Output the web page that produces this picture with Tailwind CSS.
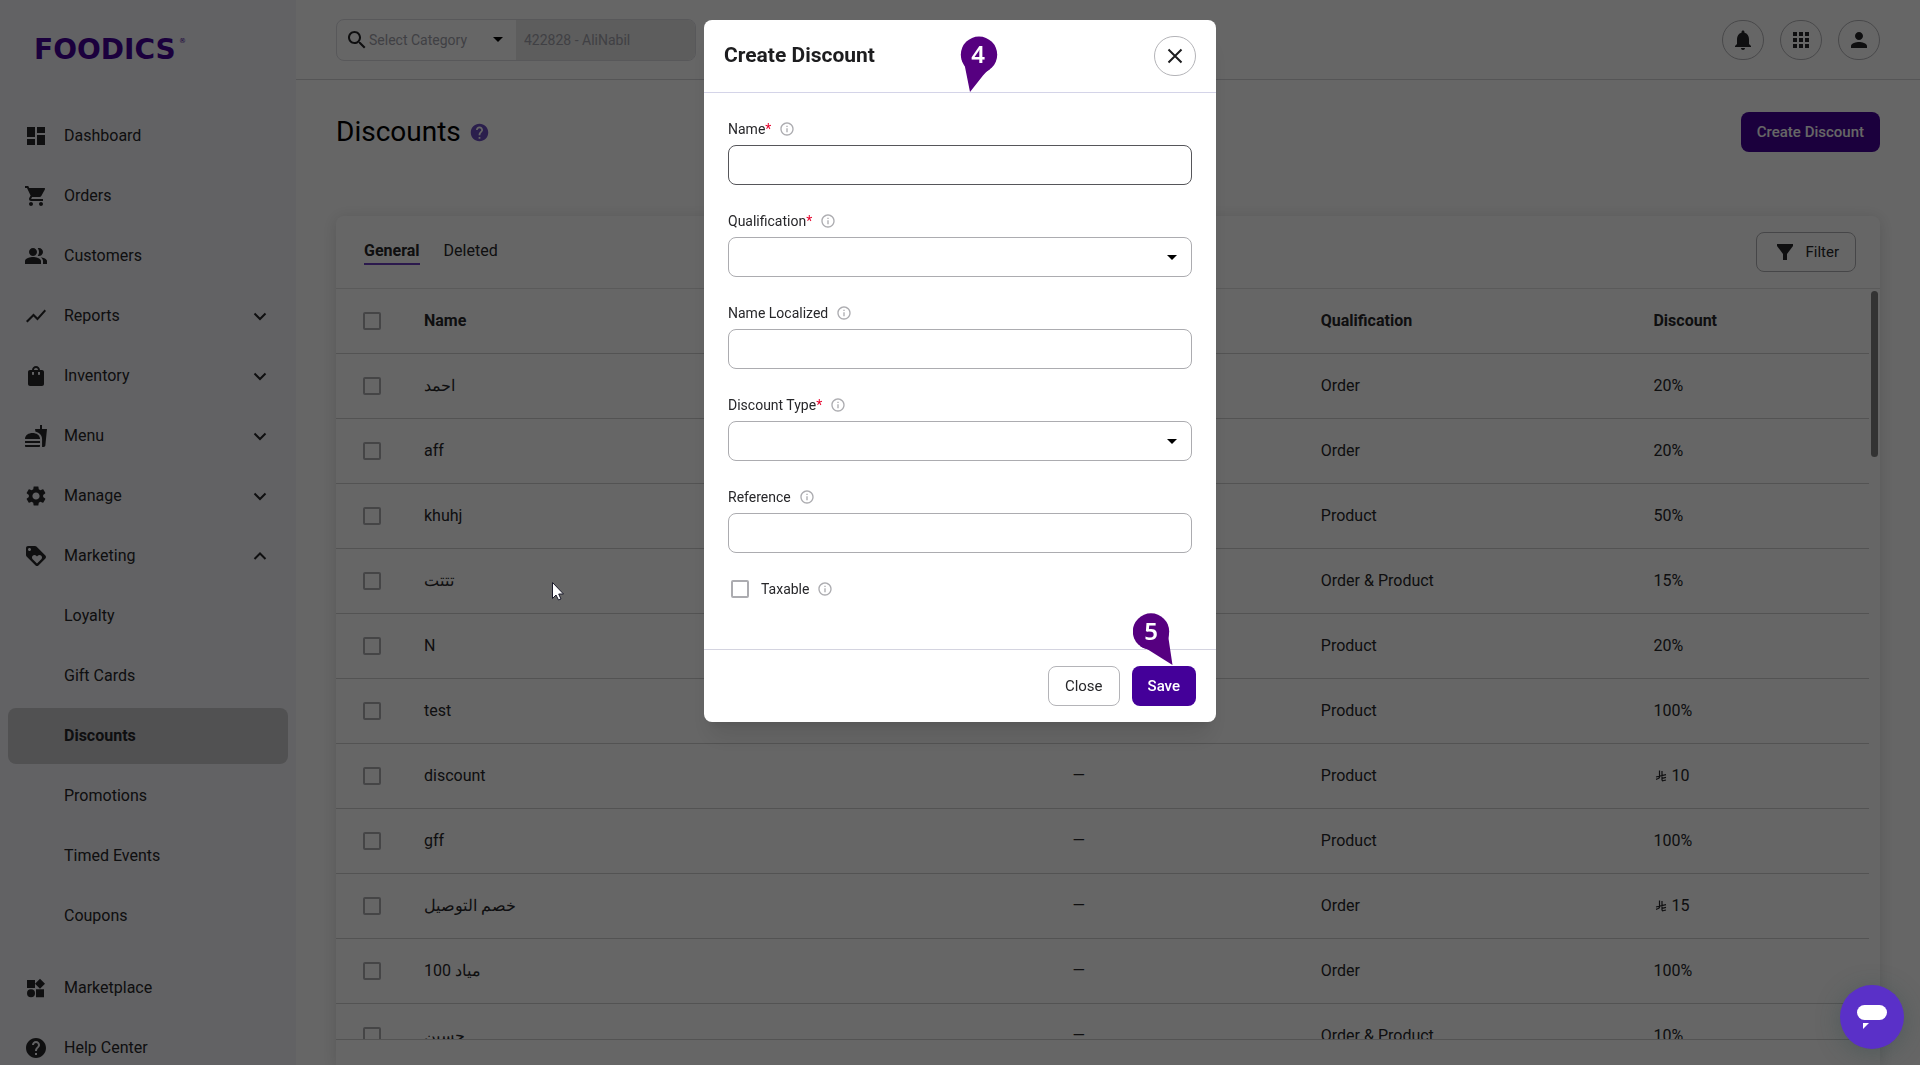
<!DOCTYPE html>
<html lang="en">

<head>
    <meta charset="UTF-8">
    <title>Discounts</title>
    <script src="https://cdn.jsdelivr.net/npm/@tailwindcss/browser@4"></script>
</head>

<body class="h-screen overflow-hidden bg-white text-[#27272a] text-base font-['Roboto','Noto_Sans',sans-serif]">

    <div class="flex h-full">
        <aside class="w-[296px] shrink-0 overflow-hidden bg-[#f5f5f9]">
            <div class="h-[108px] pt-[26px] pl-[34px]">
                <svg class="w-[160px] h-12" role="img" aria-label="Foodics">
                    <text x="0" y="33" font-family="DejaVu Sans" font-weight="bold" font-size="28" fill="#440099">FOODICS</text>
                    <text x="145" y="17" font-family="DejaVu Sans" font-size="7" fill="#440099">®</text>
                </svg>
            </div>
            <nav id="nav" class="flex flex-col gap-1 px-2"></nav>
        </aside>

        <div class="flex flex-1 min-w-0 flex-col">
            <header class="flex h-20 shrink-0 items-center justify-between border-b border-[#d4d4d8] px-10">
                <div class="flex h-[42px] w-[360px] overflow-hidden rounded-lg border border-[#dcdce2]">
                    <div class="relative flex w-[179px] shrink-0 items-center gap-0 pl-2">
                        <svg viewBox="0 0 24 24" class="size-6 shrink-0" fill="currentColor"><path d="M15.5 14h-.79l-.28-.27C15.41 12.59 16 11.11 16 9.5 16 5.91 13.09 3 9.5 3S3 5.91 3 9.5 5.91 16 9.5 16c1.61 0 3.09-.59 4.23-1.57l.27.28v.79l5 4.99L20.49 19l-4.99-5zm-6 0C7.01 14 5 11.99 5 9.5S7.01 5 9.5 5 14 7.01 14 9.5 11.99 14 9.5 14z"/></svg>
                        <select aria-label="Category" class="h-full w-full appearance-none bg-transparent text-sm text-[#a1a1aa] outline-none">
                            <option>Select Category</option>
                        </select>
                        <svg viewBox="0 0 10 5" class="pointer-events-none absolute right-[13px] h-[5px] w-[10px]"><path d="M0 0h10L5 5z"/></svg>
                    </div>
                    <input type="text" aria-label="Business" value="422828 - AliNabil" disabled class="min-w-0 flex-1 bg-[#e8e8e8] px-2 text-sm text-[#a1a1aa]">
                </div>
                <div class="flex gap-4">
                    <button aria-label="Notifications" class="flex h-10 w-[42px] items-center justify-center rounded-full border border-[#b4b4b8]">
                        <svg viewBox="0 0 24 24" class="size-6" fill="currentColor"><path d="M12 22c1.1 0 2-.9 2-2h-4c0 1.1.89 2 2 2zm6-6v-5c0-3.07-1.64-5.64-4.5-6.32V4c0-.83-.67-1.5-1.5-1.5s-1.5.67-1.5 1.5v.68C7.63 5.36 6 7.92 6 11v5l-2 2v1h16v-1l-2-2z"/></svg>
                    </button>
                    <button aria-label="Apps" class="flex h-10 w-[42px] items-center justify-center rounded-full border border-[#b4b4b8]">
                        <svg viewBox="0 0 24 24" class="size-6" fill="currentColor"><path d="M4 8h4V4H4v4zm6 12h4v-4h-4v4zm-6 0h4v-4H4v4zm0-6h4v-4H4v4zm6 0h4v-4h-4v4zm6-10v4h4V4h-4zm-6 4h4V4h-4v4zm6 6h4v-4h-4v4zm0 6h4v-4h-4v4z"/></svg>
                    </button>
                    <button aria-label="Account" class="flex h-10 w-[42px] items-center justify-center rounded-full border border-[#b4b4b8]">
                        <svg viewBox="0 0 24 24" class="size-6" fill="currentColor"><path d="M12 12c2.21 0 4-1.79 4-4s-1.79-4-4-4-4 1.79-4 4 1.79 4 4 4zm0 2c-2.67 0-8 1.34-8 4v2h16v-2c0-2.66-5.33-4-8-4z"/></svg>
                    </button>
                </div>
            </header>

            <main class="flex min-h-0 flex-1 flex-col px-10 pt-8">
                <div class="flex h-10 shrink-0 items-center justify-between">
                    <div class="flex items-center gap-2">
                        <h1 class="text-[28px] leading-10 text-black">Discounts</h1>
                        <a href="#" aria-label="Help" class="text-[#6b4fc0]">
                            <svg viewBox="0 0 24 24" class="size-[21px]" fill="currentColor"><path d="M12 2C6.48 2 2 6.48 2 12s4.48 10 10 10 10-4.48 10-10S17.52 2 12 2zm1 17h-2v-2h2v2zm2.07-7.75l-.9.92C13.45 12.9 13 13.5 13 15h-2v-.5c0-1.1.45-2.1 1.17-2.83l1.24-1.26c.37-.36.59-.86.59-1.41 0-1.1-.9-2-2-2s-2 .9-2 2H8c0-2.21 1.79-4 4-4s4 1.79 4 4c0 .88-.36 1.68-.93 2.25z"/></svg>
                        </a>
                    </div>
                    <button class="h-10 rounded-lg bg-[#440099] px-4 text-[15px] font-medium text-white">Create Discount</button>
                </div>

                <section class="mt-16 flex min-h-0 flex-1 flex-col rounded-t-lg shadow-[0_2px_16px_rgba(0,0,0,0.14)]">
                    <div class="flex h-[73px] shrink-0 items-center justify-between border-b border-[#e0e0e0] pr-6 pl-7">
                        <div class="flex gap-6 text-base">
                            <a href="#" class="border-b-2 border-[#6b3fc0] font-bold">General</a>
                            <a href="#">Deleted</a>
                        </div>
                        <button class="flex h-10 items-center gap-2 rounded-lg border border-[#b0b0b4] px-4 text-[15px]">
                            <svg viewBox="0 0 24 24" class="size-6" fill="currentColor"><path d="M4 4h16v2l-6 8v6h-4v-6L4 6z"/></svg>
                            Filter
                        </button>
                    </div>
                    <div class="relative min-h-0 flex-1 overflow-hidden pr-[11px]">
                        <table class="w-full table-fixed border-collapse text-left">
                            <thead>
                                <tr class="h-16 border-b border-[#cfcfcf]">
                                    <th class="w-[88px] pl-[27px]"><input type="checkbox" aria-label="Select all" class="block size-[18px] appearance-none rounded-xs border-2 border-[#acacb0]"></th>
                                    <th class="w-[42.3%] font-bold">Name</th>
                                    <th class="w-[16.2%]"></th>
                                    <th class="w-[21.7%] font-bold">Qualification</th>
                                    <th class="font-bold">Discount</th>
                                </tr>
                            </thead>
                            <tbody id="rows"></tbody>
                        </table>
                        <div class="absolute top-[2px] right-[2px] h-[166px] w-[7px] rounded-full bg-[#808080]"></div>
                    </div>
                    <div class="h-[26px] shrink-0 border-t border-[#cfcfcf]"></div>
                </section>
            </main>
        </div>
    </div>

    <!-- Create discount modal -->
    <div class="fixed inset-0 flex items-start justify-center bg-black/60 pt-5">
        <div role="dialog" aria-labelledby="modalTitle" class="relative w-full max-w-lg rounded-lg bg-white shadow-xl">
            <div class="flex h-[73px] items-center justify-between border-b border-[#d4d4e8] px-5">
                <h2 id="modalTitle" class="text-[21px] font-bold text-[#1d1d1f]">Create Discount</h2>
                <button aria-label="Close dialog" class="flex h-10 w-[42px] items-center justify-center rounded-full border border-[#b4b4b8]">
                    <svg viewBox="0 0 24 24" class="size-6" fill="none" stroke="#1d1d1f" stroke-width="2"><path d="M5.500 5.500l13 13M18.500 5.500l-13 13"/></svg>
                </button>
            </div>

            <form id="discountForm" class="flex flex-col gap-6 px-6 pt-6 text-sm">
                <div>
                    <div class="mb-1 flex h-6 items-center gap-2">
                        <label for="name">Name<span class="text-[#e5002b]">*</span></label>
                        <svg viewBox="0 0 24 24" class="size-4 text-[#acacb0]" fill="currentColor"><use href="#info"/></svg>
                    </div>
                    <input id="name" type="text" class="block h-10 w-full rounded-lg border border-[#56565a] px-3 outline-none">
                </div>
                <div>
                    <div class="mb-1 flex h-6 items-center gap-2">
                        <label for="qualification">Qualification<span class="text-[#e5002b]">*</span></label>
                        <svg viewBox="0 0 24 24" class="size-4 text-[#acacb0]" fill="currentColor"><use href="#info"/></svg>
                    </div>
                    <div class="relative flex items-center">
                        <select id="qualification" class="h-10 w-full appearance-none rounded-lg border border-[#acacb0] px-3 outline-none">
                            <option></option>
                        </select>
                        <svg viewBox="0 0 10 5" class="pointer-events-none absolute right-[15px] h-[5px] w-[10px]"><path d="M0 0h10L5 5z"/></svg>
                    </div>
                </div>
                <div>
                    <div class="mb-1 flex h-6 items-center gap-2">
                        <label for="nameLocalized">Name Localized</label>
                        <svg viewBox="0 0 24 24" class="size-4 text-[#acacb0]" fill="currentColor"><use href="#info"/></svg>
                    </div>
                    <input id="nameLocalized" type="text" class="block h-10 w-full rounded-lg border border-[#acacb0] px-3 outline-none">
                </div>
                <div>
                    <div class="mb-1 flex h-6 items-center gap-2">
                        <label for="discountType">Discount Type<span class="text-[#e5002b]">*</span></label>
                        <svg viewBox="0 0 24 24" class="size-4 text-[#acacb0]" fill="currentColor"><use href="#info"/></svg>
                    </div>
                    <div class="relative flex items-center">
                        <select id="discountType" class="h-10 w-full appearance-none rounded-lg border border-[#acacb0] px-3 outline-none">
                            <option></option>
                        </select>
                        <svg viewBox="0 0 10 5" class="pointer-events-none absolute right-[15px] h-[5px] w-[10px]"><path d="M0 0h10L5 5z"/></svg>
                    </div>
                </div>
                <div>
                    <div class="mb-1 flex h-6 items-center gap-2">
                        <label for="reference">Reference</label>
                        <svg viewBox="0 0 24 24" class="size-4 text-[#acacb0]" fill="currentColor"><use href="#info"/></svg>
                    </div>
                    <input id="reference" type="text" class="block h-10 w-full rounded-lg border border-[#acacb0] px-3 outline-none">
                </div>
                <div class="mb-12 flex h-6 items-center gap-2 pl-[3px]">
                    <input id="taxable" type="checkbox" class="mr-1 size-[18px] appearance-none rounded-xs border-2 border-[#acacb0]">
                    <label for="taxable">Taxable</label>
                    <svg viewBox="0 0 24 24" class="size-4 text-[#acacb0]" fill="currentColor"><use href="#info"/></svg>
                </div>
            </form>

            <div class="flex justify-end gap-3 border-t border-[#d4d4e0] px-5 py-4 text-[15px]">
                <button class="h-10 rounded-lg border border-[#b4b4b8] px-4">Close</button>
                <button type="submit" form="discountForm" class="h-10 rounded-lg bg-[#440099] px-4 font-medium text-white">Save</button>
            </div>

            <!-- Step markers -->
            <svg viewBox="0 0 40 58" class="absolute top-4 left-[255px] h-[58px] w-10">
                <g fill="#560080"><circle cx="20" cy="18.700" r="18.200"/><path d="M2.500 23Q5 26 6 31L11 56 24 39.500Q26 36.500 31 33z"/></g>
                <text x="19" y="27" text-anchor="middle" font-family="Noto Sans" font-weight="600" font-size="24" fill="#fff">4</text>
            </svg>
            <svg viewBox="0 0 44 58" class="absolute right-[39px] bottom-14 h-[58px] w-11">
                <g fill="#560080"><circle cx="18" cy="23.500" r="18.200"/><path d="M7 38Q10 40 14 41L39.500 57 35.600 31V22z"/></g>
                <text x="18" y="32" text-anchor="middle" font-family="Noto Sans" font-weight="600" font-size="24" fill="#fff">5</text>
            </svg>
        </div>
    </div>

    <!-- Mouse pointer -->
    <svg viewBox="0 0 14 20" class="fixed top-[581px] left-[551px] h-5 w-[14px]"><path d="M1.500 1.500v16l3.500-3.500 2.500 5 2.500-1-2.300-5h4.800z" fill="#fff" stroke="#1a1a2a"/></svg>

    <button aria-label="Open chat" class="fixed right-4 bottom-4 flex size-16 items-center justify-center rounded-full bg-[#5a30c8] shadow-[0_4px_24px_rgba(40,70,70,0.35)]">
        <svg viewBox="0 0 32 26" class="h-[26px] w-8" fill="#fff"><rect x="1" y="1" width="30" height="15" rx="7.500"/><path d="M7 19h6l-6 6z"/></svg>
    </button>

    <svg class="hidden">
        <symbol id="info" viewBox="0 0 24 24"><path d="M11 7h2v2h-2zm0 4h2v6h-2zm1-9C6.480 2 2 6.480 2 12s4.480 10 10 10 10-4.480 10-10S17.520 2 12 2zm0 18c-4.410 0-8-3.590-8-8s3.590-8 8-8 8 3.590 8 8-3.590 8-8 8z"/></symbol>
        <symbol id="riyal" viewBox="0 0 12 12"><path d="M4.500.5v6.500Q4.500 8.500 1 9.300M7 1v9.500M1 7l10-2.300M7 8.300l4-1M7 11l4-1" fill="none" stroke="currentColor" stroke-width="1.200"/></symbol>
    </svg>

    <script>
        const icons = {
            dashboard: "M3 13h8V3H3v10zm0 8h8v-6H3v6zm10 0h8V11h-8v10zm0-18v6h8V3h-8z",
            cart: "M7 18c-1.1 0-1.99.9-1.99 2S5.9 22 7 22s2-.9 2-2-.9-2-2-2zM1 2v2h2l3.6 7.59-1.35 2.45c-.16.28-.25.61-.25.96 0 1.1.9 2 2 2h12v-2H7.42c-.14 0-.25-.11-.25-.25l.03-.12.9-1.63h7.45c.75 0 1.41-.41 1.75-1.03l3.58-6.49A1.003 1.003 0 0 0 20 4H5.21l-.94-2H1zm16 16c-1.1 0-1.99.9-1.99 2s.89 2 1.99 2 2-.9 2-2-.9-2-2-2z",
            people: "M16.67 13.13C18.04 14.06 19 15.32 19 17v3h4v-3c0-2.18-3.57-3.47-6.33-3.87zM15 12c2.21 0 4-1.79 4-4s-1.79-4-4-4c-.47 0-.91.1-1.33.24C14.5 5.27 15 6.58 15 8s-.5 2.73-1.33 3.76c.42.14.86.24 1.33.24zM9 12c2.21 0 4-1.79 4-4s-1.79-4-4-4-4 1.79-4 4 1.79 4 4 4zm0 1c-2.67 0-8 1.34-8 4v3h16v-3c0-2.66-5.33-4-8-4z",
            chart: "M3.5 18.49l6-6.01 4 4L22 6.92l-1.41-1.41-7.09 7.97-4-4L2 16.99z",
            bag: "M18 6h-2c0-2.21-1.79-4-4-4S8 3.79 8 6H6c-1.1 0-2 .9-2 2v12c0 1.1.9 2 2 2h12c1.1 0 2-.9 2-2V8c0-1.1-.9-2-2-2zm-8 4c0 .55-.45 1-1 1s-1-.45-1-1V8h2v2zm2-6c1.1 0 2 .9 2 2h-4c0-1.1.9-2 2-2zm4 6c0 .55-.45 1-1 1s-1-.45-1-1V8h2v2z",
            food: "M18.06 22.99h1.66c.84 0 1.53-.64 1.63-1.46L23 5.05h-5V1h-1.97v4.05h-4.97l.3 2.34c1.71.47 3.31 1.32 4.27 2.26 1.44 1.42 2.43 2.89 2.43 5.29v8.05zM1 21.99V21h15.03v.99c0 .55-.45 1-1.01 1H2.01c-.56 0-1.01-.45-1.01-1zm15.03-7c0-8-15.03-8-15.03 0h15.03zM1.02 17h15v2h-15z",
            gear: "M19.14 12.94c.04-.3.06-.61.06-.94 0-.32-.02-.64-.07-.94l2.03-1.58c.18-.14.23-.41.12-.61l-1.92-3.32c-.12-.22-.37-.29-.59-.22l-2.39.96c-.5-.38-1.03-.7-1.62-.94l-.36-2.54c-.04-.24-.24-.41-.48-.41h-3.84c-.24 0-.43.17-.47.41l-.36 2.54c-.59.24-1.13.57-1.62.94l-2.39-.96c-.22-.08-.47 0-.59.22L2.74 8.87c-.12.21-.08.47.12.61l2.03 1.58c-.05.3-.09.63-.09.94s.02.64.07.94l-2.03 1.58c-.18.14-.23.41-.12.61l1.92 3.32c.12.22.37.29.59.22l2.39-.96c.5.38 1.03.7 1.62.94l.36 2.54c.05.24.24.41.48.41h3.84c.24 0 .44-.17.47-.41l.36-2.54c.59-.24 1.13-.56 1.62-.94l2.39.96c.22.08.47 0 .59-.22l1.92-3.32c.12-.22.07-.47-.12-.61l-2.01-1.58zM12 15.6c-1.98 0-3.6-1.62-3.6-3.6s1.62-3.6 3.6-3.6 3.6 1.62 3.6 3.6-1.62 3.6-3.6 3.6z",
            tag: "M21.41 11.58l-9-9C12.05 2.22 11.55 2 11 2H4c-1.1 0-2 .9-2 2v7c0 .55.22 1.05.59 1.42l9 9c.36.36.86.58 1.41.58.55 0 1.05-.22 1.41-.59l7-7c.37-.36.59-.86.59-1.41 0-.55-.23-1.06-.59-1.42zM5.5 7C4.67 7 4 6.33 4 5.5S4.67 4 5.5 4 7 4.67 7 5.5 6.33 7 5.5 7zm11.77 8.27L13 19.54l-4.27-4.27C8.28 14.81 8 14.19 8 13.5c0-1.38 1.12-2.5 2.5-2.5.69 0 1.32.28 1.77.74l.73.72.73-.73c.45-.45 1.08-.73 1.77-.73 1.38 0 2.5 1.12 2.5 2.5 0 .69-.28 1.32-.73 1.77z",
            market: "M3 4h8v8H3zM16 2.800l5 5-5 5-5-5zM12 13.200h8v8h-8zM7 13.200a4 4 0 1 1 0 8 4 4 0 0 1 0-8z",
            help: "M12 2C6.48 2 2 6.48 2 12s4.48 10 10 10 10-4.48 10-10S17.52 2 12 2zm1 17h-2v-2h2v2zm2.07-7.75l-.9.92C13.45 12.9 13 13.5 13 15h-2v-.5c0-1.1.45-2.1 1.17-2.83l1.24-1.26c.37-.36.59-.86.59-1.41 0-1.1-.9-2-2-2s-2 .9-2 2H8c0-2.21 1.79-4 4-4s4 1.79 4 4c0 .88-.36 1.68-.93 2.25z"
        };
        const down = "M6.500 9.500l5.500 5.500 5.500-5.500";
        const up = "M6.500 15l5.500-5.500 5.500 5.500";

        const menu = [
            { name: "Dashboard", icon: "dashboard" },
            { name: "Orders", icon: "cart" },
            { name: "Customers", icon: "people" },
            { name: "Reports", icon: "chart", arrow: down },
            { name: "Inventory", icon: "bag", arrow: down },
            { name: "Menu", icon: "food", arrow: down },
            { name: "Manage", icon: "gear", arrow: down },
            { name: "Marketing", icon: "tag", arrow: up },
            { name: "Loyalty" },
            { name: "Gift Cards" },
            { name: "Discounts", active: true },
            { name: "Promotions" },
            { name: "Timed Events" },
            { name: "Coupons" },
            { name: "Marketplace", icon: "market", spaced: true },
            { name: "Help Center", icon: "help" }
        ];

        document.getElementById("nav").innerHTML = menu.map((item) => `
            <a href="#" class="flex h-14 shrink-0 items-center rounded-lg px-4 ${item.active ? "bg-[#cacace] font-bold" : ""} ${item.spaced ? "mt-3" : ""}">
                <span class="mr-4 size-6">${item.icon ? `<svg viewBox="0 0 24 24" class="size-6" fill="currentColor"><path d="${icons[item.icon]}"/></svg>` : ""}</span>
                <span class="flex-1">${item.name}</span>
                ${item.arrow ? `<svg viewBox="0 0 24 24" class="size-6" fill="none" stroke="currentColor" stroke-width="2"><path d="${item.arrow}"/></svg>` : ""}
            </a>
        `).join("");

        const riyal = `<svg class="ml-0.5 inline size-3"><use href="#riyal"/></svg>`;
        const discounts = [
            ["احمد", "Order", "20%"],
            ["aff", "Order", "20%"],
            ["khuhj", "Product", "50%"],
            ["تتتت", "Order & Product", "15%"],
            ["N", "Product", "20%"],
            ["test", "Product", "100%"],
            ["discount", "Product", riyal + " 10"],
            ["gff", "Product", "100%"],
            ["خصم التوصيل", "Order", riyal + " 15"],
            ["مياد 100", "Order", "100%"],
            ["حسين", "Order & Product", "10%"]
        ];

        document.getElementById("rows").innerHTML = discounts.map(([name, qualification, amount]) => `
            <tr class="h-[65px] border-b border-[#cfcfcf]">
                <td class="pl-[27px]"><input type="checkbox" aria-label="Select ${name}" class="block size-[18px] appearance-none rounded-xs border-2 border-[#acacb0]"></td>
                <td><bdi>${name}</bdi></td>
                <td>—</td>
                <td>${qualification.replace("&", "&amp;")}</td>
                <td>${amount}</td>
            </tr>
        `).join("");
    </script>
</body>

</html>
